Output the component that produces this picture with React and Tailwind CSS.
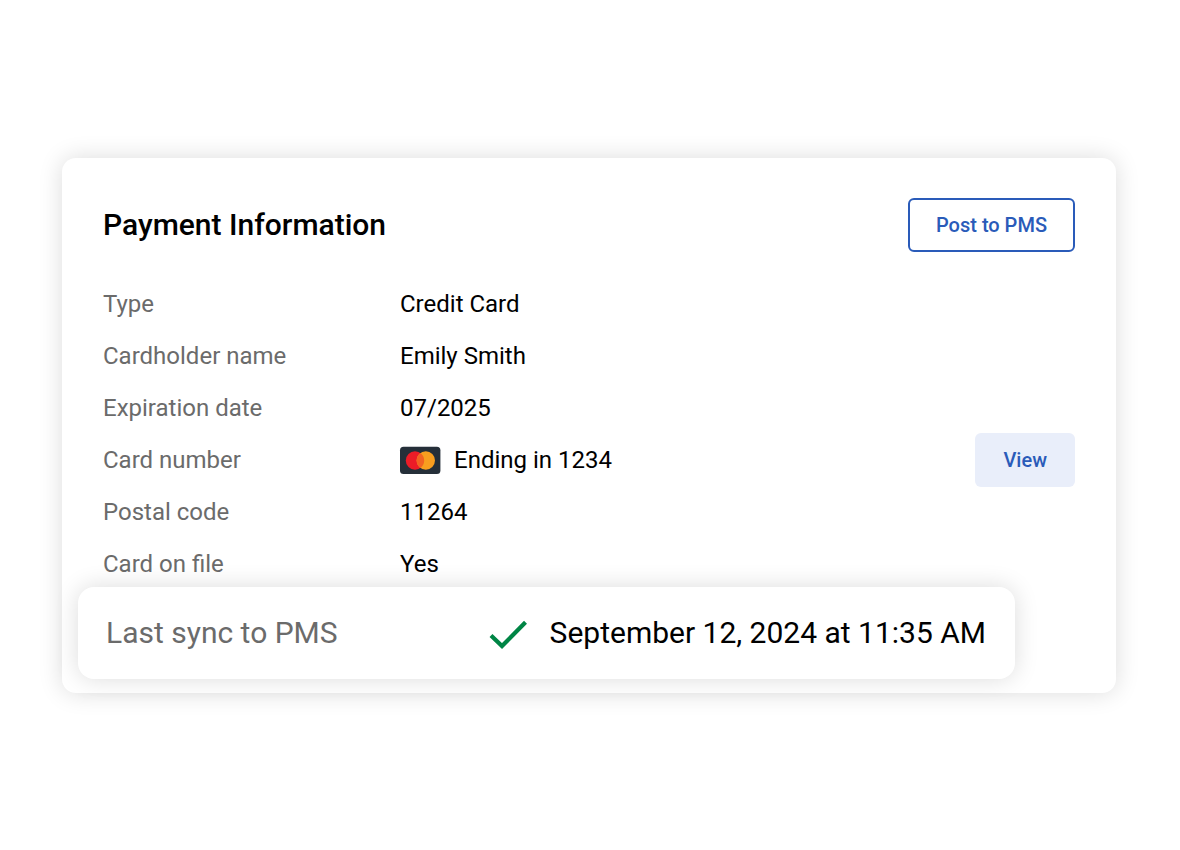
import React from "react";

const details = [
  { label: "Type", value: "Credit Card" },
  { label: "Cardholder name", value: "Emily Smith" },
  { label: "Expiration date", value: "07/2025" },
  { label: "Card number", value: "Ending in 1234", card: true },
  { label: "Postal code", value: "11264" },
  { label: "Card on file", value: "Yes" },
];

const MastercardLogo = () => (
  <svg className="h-7 w-10 shrink-0" viewBox="0 0 40 28" overflow="visible" role="img" aria-label="Mastercard">
    <rect y="0.7" width="40.4" height="27.3" rx="3.5" fill="#252f39" />
    <circle cx="15" cy="14.5" r="9.2" fill="#ec1c27" />
    <circle cx="25.8" cy="14.5" r="9.2" fill="#f89e1f" />
    <path d="M20.4 7.05a9.2 9.2 0 0 1 0 14.9a9.2 9.2 0 0 1 0-14.9z" fill="#f26322" />
  </svg>
);

const CheckIcon = () => (
  <svg className="h-7 w-10 shrink-0" viewBox="0 0 40 28" overflow="visible" aria-hidden="true">
    <path d="M3 16.5L14 27L37.5 3.2" fill="none" stroke="#008545" strokeWidth="4.2" />
  </svg>
);

const App = () => {
  return (
    <main className="flex min-h-screen items-center bg-white pr-16 pl-[62px] font-[Roboto,sans-serif] text-black">
      <section className="w-full rounded-[14px] bg-white px-[41px] pt-10 pb-[14px] shadow-[0_0_24px_rgba(0,0,0,0.14)]">
        <header className="flex items-center justify-between">
          <h1 className="text-3xl font-medium">Payment Information</h1>
          <button className="rounded-md border-2 border-[#2a5bb9] px-[26px] py-[11px] text-xl font-medium text-[#2a5bb9]">
            Post to PMS
          </button>
        </header>

        <dl className="mt-[26px] text-2xl">
          {details.map((item) => (
            <div key={item.label} className="flex h-[52px] items-center">
              <dt className="w-[297px] text-[#6b6b6b]">{item.label}</dt>
              <dd className="flex flex-1 items-center gap-[14px]">
                {item.card && <MastercardLogo />}
                {item.value}
                {item.card && (
                  <button className="ml-auto rounded-md bg-[#e9eefa] px-7 py-[13px] text-xl font-medium text-[#2a5bb9]">
                    View
                  </button>
                )}
              </dd>
            </div>
          ))}
        </dl>

        {/* sync status card, lifted over the bottom of the list */}
        <div className="relative -mt-[3px] mr-[60px] -ml-[25px] flex items-center rounded-2xl bg-white pr-[29px] pl-7 py-7 text-3xl shadow-[0_0_24px_rgba(0,0,0,0.14)]">
          <span className="text-[#6b6b6b]">Last sync to PMS</span>
          <span className="ml-auto flex items-center gap-[22px]">
            <CheckIcon />
            September 12, 2024 at 11:35 AM
          </span>
        </div>
      </section>
    </main>
  );
};

export default App;
